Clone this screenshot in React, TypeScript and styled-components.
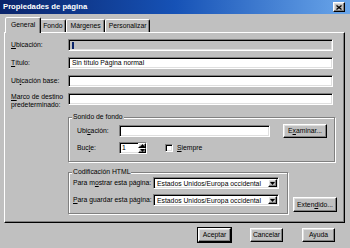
import React from "react";
import styled, { createGlobalStyle, css } from "styled-components";

const GlobalStyle = createGlobalStyle`
  html, body {
    margin: 0;
    padding: 0;
    background: #c0c0c0;
  }
  * {
    box-sizing: border-box;
  }
`;

const raised = css`
  border: 1px solid;
  border-color: #fff #000 #000 #fff;
  box-shadow: inset -1px -1px #808080, inset 1px 1px #dfdfdf;
`;

const sunken = css`
  border: 1px solid;
  border-color: #808080 #fff #fff #808080;
  box-shadow: inset 1px 1px #000, inset -1px -1px #dfdfdf;
`;

const Window = styled.div`
  width: 350px;
  height: 248px;
  overflow: hidden;
  background: #c0c0c0;
  font-family: "Liberation Sans", Arial, sans-serif;
  font-size: 6.8px;
  line-height: 8px;
  color: #000;
`;

const TitleBar = styled.div`
  height: 14px;
  display: flex;
  align-items: center;
  justify-content: space-between;
  padding: 0 5px 0 3px;
  background: linear-gradient(90deg, #0a246a 0%, #1652b6 50%, #6aa6ea 100%);
`;

const Title = styled.span`
  color: #fff;
  font-weight: bold;
  font-size: 7.7px;
`;

const CloseButton = styled.div`
  width: 12px;
  height: 10px;
  background: #c0c0c0;
  ${raised};
  display: flex;
  align-items: center;
  justify-content: center;
`;

const TabStrip = styled.div`
  display: flex;
  align-items: flex-end;
  height: 15px;
  margin-top: 3px;
  padding-left: 7px;
`;

const Tab = styled.div<{ $active?: boolean }>`
  position: relative;
  height: 13px;
  padding: 0 3px;
  display: flex;
  align-items: center;
  background: #c0c0c0;
  border: 1px solid;
  border-bottom: none;
  border-color: #fff #000 transparent #fff;
  border-radius: 2px 2px 0 0;
  box-shadow: inset -1px 0 #808080;
  white-space: nowrap;
  ${(p) =>
    p.$active &&
    css`
      z-index: 1;
      height: 16px;
      margin: 0 -2px -1px;
      padding: 0 5px 2px;
    `}
`;

const Panel = styled.div`
  height: 191px;
  margin: 0 5px 0 4px;
  padding: 6px 9px 0 6px;
  border: 1px solid;
  border-color: #fff #000 #000 #fff;
  box-shadow: inset -1px -1px #808080;
`;

const FieldGrid = styled.div`
  display: grid;
  grid-template-columns: 57px 265px;
  row-gap: 6px;
  align-items: start;
`;

const FieldLabel = styled.label<{ $multiline?: boolean }>`
  line-height: ${(p) => (p.$multiline ? "8px" : "12px")};
  white-space: ${(p) => (p.$multiline ? "normal" : "nowrap")};
`;

const TextBox = styled.div<{ $disabled?: boolean; $width?: number }>`
  ${sunken};
  height: 12px;
  width: ${(p) => (p.$width ? `${p.$width}px` : "auto")};
  padding: 0 3px;
  display: flex;
  align-items: center;
  white-space: nowrap;
  background: ${(p) => (p.$disabled ? "#c0c0c0" : "#fff")};
`;

const Caret = styled.span`
  width: 2px;
  height: 7px;
  background: #0a246a;
`;

const GroupBox = styled.div<{ $width: number; $pad: string }>`
  position: relative;
  width: ${(p) => p.$width}px;
  margin-left: 57px;
  padding: ${(p) => p.$pad};
  border: 1px solid #808080;
  box-shadow: inset 1px 1px #fff, 1px 1px #fff;
`;

const Legend = styled.span`
  position: absolute;
  top: -5px;
  left: 3px;
  padding: 0 1px;
  background: #c0c0c0;
  white-space: nowrap;
`;

const SoundGroup = styled(GroupBox)`
  margin-top: 8px;
`;

const Row = styled.div<{ $height: number; $gap?: number }>`
  display: flex;
  align-items: center;
  height: ${(p) => p.$height}px;
  margin-top: ${(p) => p.$gap ?? 0}px;
  white-space: nowrap;
`;

const RowLabel = styled.span<{ $width: number }>`
  width: ${(p) => p.$width}px;
  flex-shrink: 0;
`;

const Button = styled.div<{ $width: number; $height?: number; $default?: boolean }>`
  width: ${(p) => p.$width}px;
  height: ${(p) => p.$height ?? 14}px;
  flex-shrink: 0;
  display: flex;
  align-items: center;
  justify-content: center;
  background: #c0c0c0;
  white-space: nowrap;
  ${raised};
  ${(p) =>
    p.$default &&
    css`
      box-shadow: 0 0 0 1px #000, inset -1px -1px #808080, inset 1px 1px #dfdfdf;
    `}
`;

const SpinBox = styled.div`
  ${sunken};
  width: 28px;
  height: 12px;
  display: flex;
  align-items: stretch;
  padding-left: 2px;
  background: #fff;
`;

const SpinValue = styled.span`
  flex: 1;
  line-height: 10px;
`;

const SpinButtons = styled.div`
  width: 8px;
  display: flex;
  flex-direction: column;
`;

const SpinHalf = styled.div`
  flex: 1;
  ${raised};
  background: #c0c0c0;
  display: flex;
  align-items: center;
  justify-content: center;
`;

const CheckBox = styled.div`
  ${sunken};
  width: 8px;
  height: 8px;
  margin: 0 4px 0 18px;
  background: #fff;
`;

const EncodingRow = styled.div`
  display: flex;
  align-items: flex-end;
  gap: 5px;
  margin: 10px 0 0 57px;
`;

const EncodingGroup = styled(GroupBox)`
  margin-left: 0;
  flex-shrink: 0;
`;

const ExtendButton = styled(Button)`
  margin-bottom: 2px;
`;

const Select = styled.div`
  ${sunken};
  width: 126px;
  height: 12px;
  display: flex;
  align-items: stretch;
  padding: 1px 1px 1px 3px;
  background: #fff;
`;

const SelectText = styled.span`
  flex: 1;
  line-height: 10px;
  white-space: nowrap;
  overflow: hidden;
`;

const DropButton = styled.div`
  width: 9px;
  ${raised};
  background: #c0c0c0;
  display: flex;
  align-items: center;
  justify-content: center;
`;

const Footer = styled.div`
  display: flex;
  justify-content: flex-end;
  gap: 19px;
  margin-top: 5px;
  padding-right: 15px;
`;

const Arrow = ({ up }: { up?: boolean }) => (
  <svg width="5" height="3" viewBox="0 0 5 3">
    <path d={up ? "M2.5 0L5 3H0z" : "M0 0h5L2.5 3z"} fill="#000" />
  </svg>
);

const EncodingSelect = () => (
  <Select>
    <SelectText>Estados Unidos/Europa occidental</SelectText>
    <DropButton>
      <Arrow />
    </DropButton>
  </Select>
);

export default function App() {
  return (
    <Window>
      <GlobalStyle />
      <TitleBar>
        <Title>Propiedades de página</Title>
        <CloseButton>
          <svg width="6" height="5" viewBox="0 0 6 5">
            <path d="M0.5 0.5L5.5 4.5M5.5 0.5L0.5 4.5" stroke="#000" strokeWidth="1.3" />
          </svg>
        </CloseButton>
      </TitleBar>

      <TabStrip>
        <Tab $active>General</Tab>
        <Tab>Fondo</Tab>
        <Tab>Márgenes</Tab>
        <Tab>Personalizar</Tab>
      </TabStrip>

      <Panel>
        <FieldGrid>
          <FieldLabel>
            <u>U</u>bicación:
          </FieldLabel>
          <TextBox $disabled>
            <Caret />
          </TextBox>

          <FieldLabel>
            <u>T</u>ítulo:
          </FieldLabel>
          <TextBox>Sin título Página normal</TextBox>

          <FieldLabel>
            Ub<u>i</u>cación base:
          </FieldLabel>
          <TextBox />

          <FieldLabel $multiline>
            <u>M</u>arco de destino
            <br />
            predeterminado:
          </FieldLabel>
          <TextBox />
        </FieldGrid>

        <SoundGroup $width={267} $pad="6px 7px 7px 8px">
          <Legend>Sonido de fondo</Legend>
          <Row $height={14}>
            <RowLabel $width={42}>
              Ubi<u>c</u>ación:
            </RowLabel>
            <TextBox $width={151} />
            <Button $width={44} style={{ marginLeft: 13 }}>
              E<u>x</u>aminar...
            </Button>
          </Row>
          <Row $height={12} $gap={4}>
            <RowLabel $width={42}>
              Buc<u>l</u>e:
            </RowLabel>
            <SpinBox>
              <SpinValue>1</SpinValue>
              <SpinButtons>
                <SpinHalf>
                  <Arrow up />
                </SpinHalf>
                <SpinHalf>
                  <Arrow />
                </SpinHalf>
              </SpinButtons>
            </SpinBox>
            <CheckBox />
            <span>
              <u>S</u>iempre
            </span>
          </Row>
        </SoundGroup>

        <EncodingRow>
          <EncodingGroup $width={220} $pad="4px 8px 7px 4px">
            <Legend>Codificación HTML</Legend>
            <Row $height={12}>
              <RowLabel $width={80}>
                Para m<u>o</u>strar esta página:
              </RowLabel>
              <EncodingSelect />
            </Row>
            <Row $height={12} $gap={5}>
              <RowLabel $width={80}>
                <u>P</u>ara guardar esta página:
              </RowLabel>
              <EncodingSelect />
            </Row>
          </EncodingGroup>
          <ExtendButton $width={44} $height={15}>
            Exten<u>d</u>ido...
          </ExtendButton>
        </EncodingRow>
      </Panel>

      <Footer>
        <Button $width={33} $default>
          Aceptar
        </Button>
        <Button $width={33}>Cancelar</Button>
        <Button $width={33}>Ayuda</Button>
      </Footer>
    </Window>
  );
}
